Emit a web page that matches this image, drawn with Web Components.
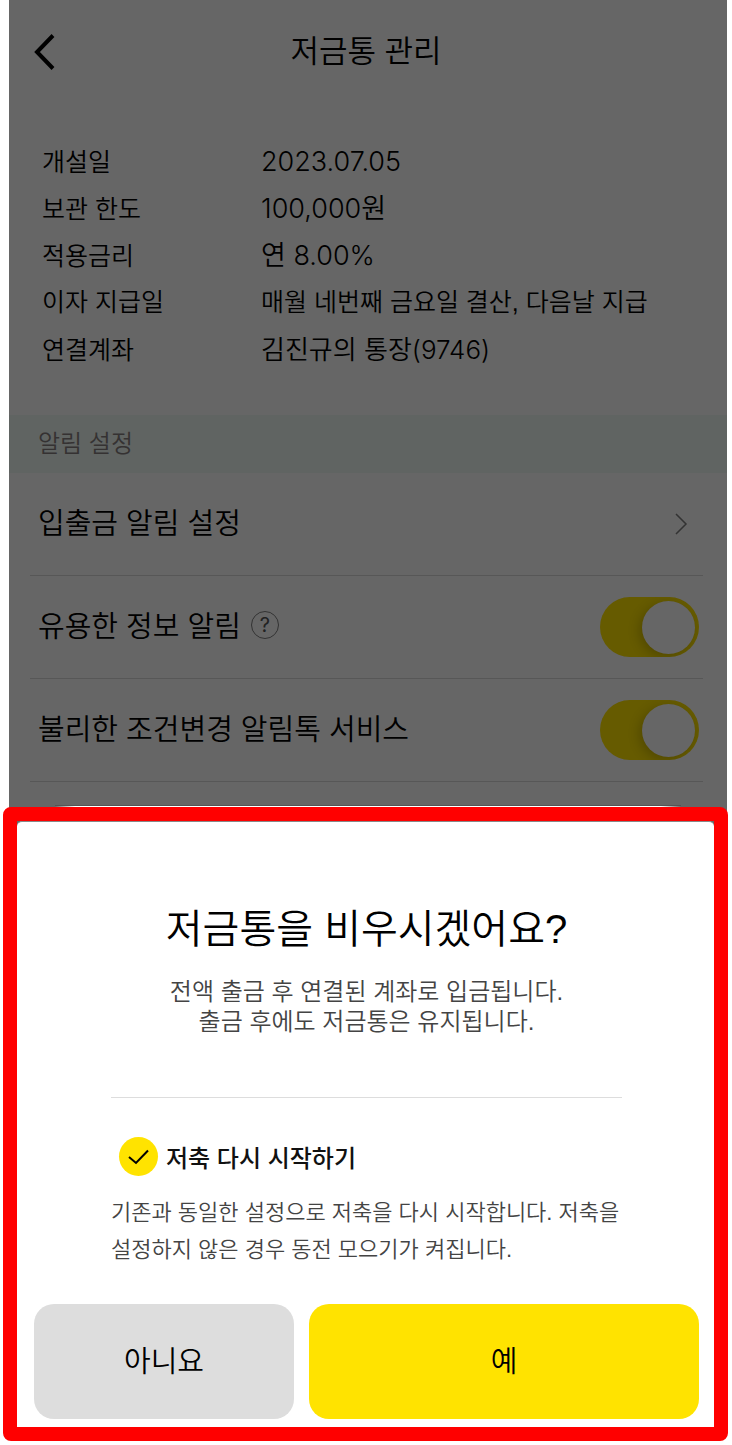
<!DOCTYPE html>
<html lang="ko">
<head>
<meta charset="utf-8">
<meta name="viewport" content="width=device-width, initial-scale=1">
<title>저금통 관리</title>
<style>
    body {
        margin: 0;
        background: #fff;
        color: #000;
        font-family: "Liberation Sans", "Noto Sans CJK KR", sans-serif;
        font-weight: 350;
    }
</style>
</head>
<body>
<my-screen>
    <my-header>저금통 관리</my-header>
    <my-info></my-info>
    <my-section>알림 설정</my-section>
    <my-row type="link">입출금 알림 설정</my-row>
    <my-row type="toggle" help>유용한 정보 알림</my-row>
    <my-row type="toggle">불리한 조건변경 알림톡 서비스</my-row>
</my-screen>
<my-sheet>
    <span slot="title">저금통을 비우시겠어요?</span>
    <span slot="text">전액 출금 후 연결된 계좌로 입금됩니다.<br>출금 후에도 저금통은 유지됩니다.</span>
    <my-check>저축 다시 시작하기</my-check>
    <span slot="note">기존과 동일한 설정으로 저축을 다시 시작합니다. 저축을 설정하지 않은 경우 동전 모으기가 켜집니다.</span>
    <my-button slot="actions">아니요</my-button>
    <my-button slot="actions" primary>예</my-button>
</my-sheet>

<script>
// Общая функция: создаем shadow root и кладем в него разметку
function attach(el, html) {
    el.attachShadow({ mode: "open" }).innerHTML = html;
}

// Затемненный экран под шторкой
class MyScreen extends HTMLElement {
    constructor() {
        super();
        attach(this, /*html*/ `
<style>
    :host {
        display: block;
        margin: 0 5px -6px 9px;
        padding-bottom: 6px;
        background: #666;
    }
    /* верхний край шторки */
    .edge {
        height: 1px;
        margin: 24px 46px 0;
        background: linear-gradient(90deg, #666, #fff 20px, #fff calc(100% - 20px), #666);
        box-shadow: 0 -1px #555;
    }
</style>
<slot></slot>
<div class="edge"></div>`);
    }
}
customElements.define("my-screen", MyScreen);

class MyHeader extends HTMLElement {
    constructor() {
        super();
        attach(this, /*html*/ `
<style>
    :host {
        display: grid;
        grid-template-columns: 1fr auto 1fr;
        align-items: center;
        height: 104px;
        padding: 0 24px 0 20px;
    }
    button {
        justify-self: start;
        padding: 0 4px;
        border: none;
        background: none;
    }
    svg {
        display: block;
    }
    h1 {
        margin: 0;
        font-size: 31px;
        font-weight: inherit;
        line-height: 48px;
    }
</style>
<button aria-label="뒤로">
    <svg width="22" height="36" viewBox="0 0 22 36" fill="none" stroke="#000" stroke-width="4"><path d="M20 1.5 4 18l16 16.500"/></svg>
</button>
<h1><slot></slot></h1>`);
    }
}
customElements.define("my-header", MyHeader);

class MyInfo extends HTMLElement {
    constructor() {
        super();
        attach(this, /*html*/ `
<style>
    :host {
        display: block;
        padding: 34px 33px 42px;
    }
    dl {
        display: grid;
        grid-template-columns: 219px 1fr;
        grid-auto-rows: 47px;
        align-items: baseline;
        margin: 0;
        font-size: 25px;
        line-height: 47px;
    }
    dd {
        margin: 0;
    }
    .num, .account {
        font-family: Inter, "Noto Sans CJK KR", sans-serif;
        font-size: 27px;
    }
    .account {
        font-size: 26px;
    }
</style>
<dl>
    <dt>개설일</dt>
    <dd class="num">2023.07.05</dd>
    <dt>보관 한도</dt>
    <dd class="num">100,000원</dd>
    <dt>적용금리</dt>
    <dd class="num">연 8.00%</dd>
    <dt>이자 지급일</dt>
    <dd>매월 네번째 금요일 결산, 다음날 지급</dd>
    <dt>연결계좌</dt>
    <dd class="account">김진규의 통장(9746)</dd>
</dl>`);
    }
}
customElements.define("my-info", MyInfo);

class MySection extends HTMLElement {
    constructor() {
        super();
        attach(this, /*html*/ `
<style>
    :host {
        display: block;
        padding: 0 29px;
        background: #606462;
        color: #353232;
        font-size: 24px;
        line-height: 58px;
    }
</style>
<slot></slot>`);
    }
}
customElements.define("my-section", MySection);

// Строка настроек: type="link" - стрелка, type="toggle" - переключатель
class MyRow extends HTMLElement {
    constructor() {
        super();
        const toggle = this.getAttribute("type") === "toggle";
        attach(this, /*html*/ `
<style>
    :host {
        display: flex;
        align-items: center;
        box-sizing: border-box;
        height: 103px;
        margin: 0 24px 0 21px;
        padding: 0 4px 0 8px;
        border-bottom: 1px solid #575757;
        font-size: 29px;
        line-height: 44px;
    }
    .row {
        display: flex;
        flex: 1;
        align-items: center;
        justify-content: space-between;
        padding-right: 11px;
        color: inherit;
        text-decoration: none;
    }
    .help {
        width: 28px;
        height: 28px;
        margin: 0 0 4px 10px;
        padding: 0;
        border: 1px solid #333;
        border-radius: 50%;
        background: none;
        color: #222;
        font: 20px/26px Inter, sans-serif;
    }
    input {
        appearance: none;
        flex: none;
        display: flex;
        align-items: center;
        justify-content: flex-end;
        width: 99px;
        height: 60px;
        margin: 0 0 0 auto;
        padding-right: 4px;
        border-radius: 30px;
        background: #665b00;
        overflow: hidden;
    }
    input::before {
        content: "";
        width: 53px;
        height: 53px;
        border-radius: 50%;
        background: #666;
        box-shadow: -3px 3px 12px rgba(0, 0, 0, 0.2);
    }
    input:not(:checked) {
        justify-content: flex-start;
        background: #555;
    }
</style>
${toggle ? /*html*/ `
<label for="toggle"><slot></slot></label>
${this.hasAttribute("help") ? `<button class="help" aria-label="도움말">?</button>` : ""}
<input type="checkbox" id="toggle" role="switch" checked>` : /*html*/ `
<a class="row" href="#">
    <slot></slot>
    <svg width="13" height="22" viewBox="0 0 13 22" fill="none" stroke="#333" stroke-width="1.500"><path d="m1 1 10 10L1 21"/></svg>
</a>`}`);
    }
}
customElements.define("my-row", MyRow);

// Шторка с подтверждением в красной рамке
class MySheet extends HTMLElement {
    constructor() {
        super();
        attach(this, /*html*/ `
<style>
    :host {
        display: block;
        position: relative;
        margin: 0 4px 4px 3px;
        border: 14px solid #f00;
        border-radius: 8px;
        background: #666;
    }
    .sheet {
        padding: 79px 15px 8px 17px;
        border-top: 1px solid #888;
        border-radius: 5px 5px 0 0;
        background: #fff;
    }
    h2 {
        margin: 0;
        font-size: 40px;
        font-weight: inherit;
        line-height: 56px;
        text-align: center;
    }
    .text {
        margin: 20px 0 0;
        color: #444;
        font-size: 24px;
        line-height: 30px;
        text-align: center;
    }
    .option {
        margin: 60px 77px 0;
        padding-top: 39px;
        border-top: 1px solid #ddd;
    }
    .note {
        margin: 18px 0 0;
        color: #444;
        font-size: 22px;
        line-height: 37px;
        word-break: keep-all;
    }
    .actions {
        display: grid;
        grid-template-columns: 2fr 3fr;
        gap: 15px;
        margin-top: 36px;
    }
</style>
<div class="sheet">
    <h2><slot name="title"></slot></h2>
    <p class="text"><slot name="text"></slot></p>
    <div class="option">
        <slot></slot>
        <p class="note"><slot name="note"></slot></p>
    </div>
    <div class="actions"><slot name="actions"></slot></div>
</div>`);
    }
}
customElements.define("my-sheet", MySheet);

class MyCheck extends HTMLElement {
    constructor() {
        super();
        attach(this, /*html*/ `
<style>
    :host {
        display: flex;
        align-items: center;
        gap: 8px;
        height: 39px;
        padding-left: 8px;
        color: #111;
        font-size: 24px;
        font-weight: 500;
    }
    label {
        padding-top: 4px;
        line-height: 36px;
    }
    .box {
        display: grid;
    }
    input, svg {
        grid-area: 1 / 1;
        width: 39px;
        height: 39px;
        margin: 0;
    }
    input {
        appearance: none;
        border-radius: 50%;
        background: #ddd;
    }
    input:checked {
        background: #ffe300;
    }
    svg {
        pointer-events: none;
    }
</style>
<span class="box">
    <input type="checkbox" id="check" checked>
    <svg viewBox="0 0 39 39" fill="none" stroke="#000" stroke-width="2"><path d="m10 20 7 6 12-12.500"/></svg>
</span>
<label for="check"><slot></slot></label>`);
    }
}
customElements.define("my-check", MyCheck);

class MyButton extends HTMLElement {
    constructor() {
        super();
        attach(this, /*html*/ `
<style>
    :host {
        display: block;
    }
    button {
        display: block;
        width: 100%;
        height: 115px;
        padding: 0 0 6px;
        border: none;
        border-radius: 20px;
        background: #ddd;
        color: #000;
        font: inherit;
        font-size: 29px;
    }
    :host([primary]) button {
        background: #ffe300;
    }
</style>
<button><slot></slot></button>`);
    }
}
customElements.define("my-button", MyButton);
</script>
</body>
</html>
